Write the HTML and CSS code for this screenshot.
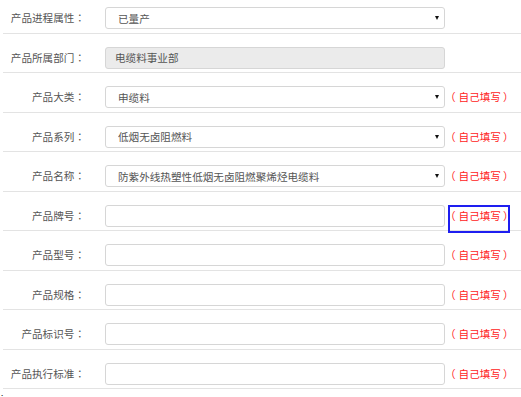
FILE: index.html
```html
<!DOCTYPE html>
<html lang="zh-CN">
<head>
  <meta charset="UTF-8">
  <meta name="viewport" content="width=device-width, initial-scale=1.0">
  <title>产品信息</title>
  <link rel="stylesheet" href="styles.css">
</head>
<body>
  <form class="product-form">
    <div class="form-row">
      <label class="form-label">产品进程属性<span class="colon" lang="zh-Hant">：</span></label>
      <div class="select-wrap">
        <select class="form-field">
          <option>已量产</option>
        </select>
      </div>
    </div>
    <div class="form-row">
      <label class="form-label">产品所属部门<span class="colon" lang="zh-Hant">：</span></label>
      <input class="form-field is-disabled" type="text" value="电缆料事业部" disabled>
    </div>
    <div class="form-row">
      <label class="form-label">产品大类<span class="colon" lang="zh-Hant">：</span></label>
      <div class="select-wrap">
        <select class="form-field">
          <option>申缆料</option>
        </select>
      </div>
      <span class="hint"><span class="po">（</span>自己填写<span class="pc">）</span></span>
    </div>
    <div class="form-row">
      <label class="form-label">产品系列<span class="colon" lang="zh-Hant">：</span></label>
      <div class="select-wrap">
        <select class="form-field">
          <option>低烟无卤阻燃料</option>
        </select>
      </div>
      <span class="hint"><span class="po">（</span>自己填写<span class="pc">）</span></span>
    </div>
    <div class="form-row">
      <label class="form-label">产品名称<span class="colon" lang="zh-Hant">：</span></label>
      <div class="select-wrap">
        <select class="form-field">
          <option>防紫外线热塑性低烟无卤阻燃聚烯烃电缆料</option>
        </select>
      </div>
      <span class="hint"><span class="po">（</span>自己填写<span class="pc">）</span></span>
    </div>
    <div class="form-row">
      <label class="form-label">产品牌号<span class="colon" lang="zh-Hant">：</span></label>
      <input class="form-field" type="text">
      <span class="hint is-marked"><span class="po">（</span>自己填写<span class="pc">）</span></span>
    </div>
    <div class="form-row">
      <label class="form-label">产品型号<span class="colon" lang="zh-Hant">：</span></label>
      <input class="form-field" type="text">
      <span class="hint"><span class="po">（</span>自己填写<span class="pc">）</span></span>
    </div>
    <div class="form-row">
      <label class="form-label">产品规格<span class="colon" lang="zh-Hant">：</span></label>
      <input class="form-field" type="text">
      <span class="hint"><span class="po">（</span>自己填写<span class="pc">）</span></span>
    </div>
    <div class="form-row">
      <label class="form-label">产品标识号<span class="colon" lang="zh-Hant">：</span></label>
      <input class="form-field" type="text">
      <span class="hint"><span class="po">（</span>自己填写<span class="pc">）</span></span>
    </div>
    <div class="form-row">
      <label class="form-label">产品执行标准<span class="colon" lang="zh-Hant">：</span></label>
      <input class="form-field" type="text">
      <span class="hint"><span class="po">（</span>自己填写<span class="pc">）</span></span>
    </div>
  </form>
  <div class="tail">.</div>
</body>
</html>
```

FILE: styles.css
```css
* {
  margin: 0;
  padding: 0;
  box-sizing: border-box;
}

html, body {
  height: 100%;
  background: #fff;
  font-family: "Noto Sans CJK SC", "Noto Sans", sans-serif;
  font-size: 10.6px;
  color: #555;
  text-spacing-trim: space-all;
  overflow: hidden;
}

.product-form {
  margin-top: -6px;
  margin-left: 3px;
}

.form-row {
  display: flex;
  align-items: flex-start;
  padding: 13px 0 3.5px;
  border-bottom: 1px solid #e3e3e3;
}

.form-label {
  width: 82px;
  height: 22px;
  line-height: 22px;
  text-align: right;
  color: #555;
  flex-shrink: 0;
}

/* centred full-width colon, as in the original font */
.colon {
  font-family: "Noto Sans CJK TC", "Noto Sans CJK SC", sans-serif;
}

.form-field {
  display: block;
  width: 340px;
  height: 22px;
  margin-left: 20px;
  border: 1px solid #d6d6d6;
  border-radius: 3px;
  background: #fff;
  font-family: inherit;
  font-size: 10.6px;
  color: #555;
  padding: 0 10px 0 12px;
  outline: none;
  appearance: none;
  -webkit-appearance: none;
}

.form-field.is-disabled {
  background: #ebebeb;
  padding-left: 9px;
}

.select-wrap {
  position: relative;
}

.select-wrap::after {
  content: "";
  position: absolute;
  right: 6px;
  top: 9px;
  border-left: 2.5px solid transparent;
  border-right: 2.5px solid transparent;
  border-top: 4px solid #111;
  pointer-events: none;
}

.hint {
  position: relative;
  height: 22px;
  line-height: 22px;
  color: #f22;
  white-space: nowrap;
}

/* the brackets have more air around them in the original */
.hint .po {
  margin-right: 3px;
}

.hint .pc {
  margin-left: 2px;
  margin-right: -3px;
}

.hint.is-marked::after {
  content: "";
  position: absolute;
  top: 0;
  left: 3px;
  right: 0.5px;
  bottom: -6px;
  border: 2px solid #1e1ef0;
}

.tail {
  margin: 1px 0 0 1px;
  font-size: 8px;
  line-height: 6px;
  color: #000;
}
```
